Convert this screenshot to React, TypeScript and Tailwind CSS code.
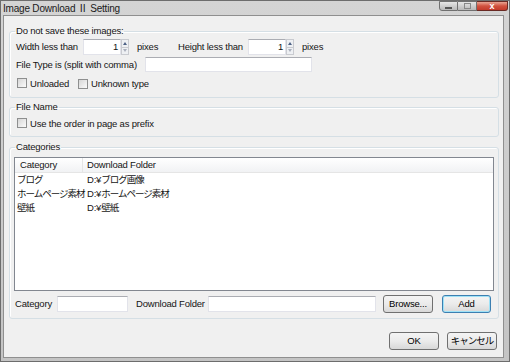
import React from "react";

const Check = () => (
  <span className="inline-block w-[10px] h-[10px] border border-[#8e8f8f] bg-linear-to-br from-[#d6d6d6] to-[#fbfbfb] shrink-0" />
);

const Spin = () => (
  <div className="w-[46px] h-[16px] flex items-stretch">
    <div className="flex-1 bg-white border border-[#e2e3ea] border-t-[#abadb3] flex items-center justify-end pr-[2px] leading-none">1</div>
    <div className="w-[8px] flex flex-col border border-[#c9cbd0] bg-[#eef0f3]">
      <div className="flex-1 flex items-center justify-center border-b border-[#c9cbd0]">
        <span className="w-0 h-0 border-l-[2px] border-r-[2px] border-b-[3px] border-l-transparent border-r-transparent border-b-[#4d6185]" />
      </div>
      <div className="flex-1 flex items-center justify-center">
        <span className="w-0 h-0 border-l-[2px] border-r-[2px] border-t-[3px] border-l-transparent border-r-transparent border-t-[#aab0bd]" />
      </div>
    </div>
  </div>
);

const Btn = ({ children, def, w }: { children: React.ReactNode; def?: boolean; w: string }) => (
  <button
    className={`${w} h-[18px] rounded-[3px] border ${def ? "border-[#3c7fb1] shadow-[inset_0_0_0_1px_#9fe2f7]" : "border-[#707070]"} bg-linear-to-b from-[#f4f4f4] via-[#ebebeb] to-[#d8d8d8] text-[9.5px] leading-none text-black flex items-center justify-center`}
  >
    {children}
  </button>
);

const jp = "tracking-[-1px]";

export default function App() {
  return (
    <div className="w-[510px] h-[362px] flex flex-col bg-linear-to-b from-[#d4d4d4] to-[#c4c4c4] border border-[#6d6d6d] font-['Liberation_Sans','Noto_Sans_CJK_JP',sans-serif] text-[9.5px] tracking-[-0.2px] text-[#151515] leading-[12px] whitespace-nowrap overflow-hidden">
      {/* title bar */}
      <div className="h-[14px] flex items-start">
        <div className="pl-[2px] pt-[2px] text-[10px] leading-[12px] text-[#1a1a1a]">Image Download Ⅱ Setting</div>
        <div className="ml-auto mr-[1px] flex h-[10px]">
          <div className="w-[19px] h-full border border-[#707070] rounded-bl-[3px] bg-linear-to-b from-[#e6e6e6] to-[#b8b8b8] flex items-center justify-center">
            <span className="w-[7px] h-[2px] bg-white border border-[#555] mt-[3px]" />
          </div>
          <div className="w-[19px] h-full border-y border-r border-[#707070] bg-linear-to-b from-[#e6e6e6] to-[#b8b8b8] flex items-center justify-center">
            <span className="w-[7px] h-[6px] border border-[#888] bg-transparent" />
          </div>
          <div className="w-[31px] h-full border-y border-r border-[#6a2a24] rounded-br-[3px] bg-linear-to-b from-[#e8a493] via-[#d0513f] to-[#c23a2a] flex items-center justify-center text-white text-[9px] font-bold leading-none">
            x
          </div>
        </div>
      </div>
      {/* client */}
      <div className="flex-1 ml-[2px] mr-[5px] mb-[3px] border border-[#8f8f8f] bg-[#f0f0f0] flex flex-col pl-[5px] pr-[4px]">
        <fieldset className="mt-[9px] border border-[#d5dfe5] rounded-[3px] px-0 pb-[6px] shadow-[inset_1px_1px_0_#fff]">
          <legend className="ml-[5px] px-px leading-[12px]">Do not save these images:</legend>
          <div className="pl-[6px] pt-[2px] flex flex-col">
            <div className="h-[16px] flex items-center">
              <span className="w-[67px]">Width less than</span>
              <Spin />
              <span className="ml-[8px] w-[41px]">pixes</span>
              <span className="w-[70px]">Height less than</span>
              <Spin />
              <span className="ml-[8px]">pixes</span>
            </div>
            <div className="h-[15px] mt-[2px] flex items-center">
              <span className="w-[129px]">File Type is (split with comma)</span>
              <div className="w-[167px] h-[15px] bg-white border border-[#e2e3ea] border-t-[#abadb3]" />
            </div>
            <div className="h-[14px] mt-[5px] flex items-center">
              <span className="ml-[1px]"><Check /></span>
              <span className="ml-[3px] w-[48px]">Unloaded</span>
              <Check />
              <span className="ml-[3px]">Unknown type</span>
            </div>
          </div>
        </fieldset>

        <fieldset className="mt-[3px] border border-[#d5dfe5] rounded-[3px] px-0 pb-[5px] shadow-[inset_1px_1px_0_#fff]">
          <legend className="ml-[5px] px-px leading-[12px]">File Name</legend>
          <div className="pl-[6px] pt-[4px]">
            <div className="h-[14px] flex items-center">
              <span className="ml-[1px]"><Check /></span>
              <span className="ml-[3px]">Use the order in page as prefix</span>
            </div>
          </div>
        </fieldset>

        <fieldset className="mt-[4px] border border-[#d5dfe5] rounded-[3px] px-0 pb-[5px] shadow-[inset_1px_1px_0_#fff]">
          <legend className="ml-[5px] px-px leading-[12px]">Categories</legend>
          <div className="px-[4px] pt-[4px] flex flex-col">
            <div className="h-[134px] border border-[#828790] bg-white flex flex-col">
              <div className="h-[15px] flex bg-linear-to-b from-white to-[#f1f2f4] border-b border-[#e5e5e5]">
                <div className="w-[68px] pl-[5px] flex items-center border-r border-[#e5e5e5]">Category</div>
                <div className="pl-[4px] flex items-center">Download Folder</div>
              </div>
              {[
                ["ブログ", "ブログ画像"],
                ["ホームページ素材", "ホームページ素材"],
                ["壁紙", "壁紙"],
              ].map(([a, b]) => (
                <div key={a} className="h-[14px] flex items-center">
                  <div className={`w-[72px] pl-[2px] ${jp}`}>{a}</div>
                  <div>
                    D:¥<span className={jp}>{b}</span>
                  </div>
                </div>
              ))}
            </div>
            <div className="mt-[4px] h-[18px] flex items-center">
              <span className="pl-[1px] w-[43px]">Category</span>
              <div className="w-[71px] h-[16px] bg-white border border-[#e2e3ea] border-t-[#abadb3]" />
              <span className="ml-[8px] w-[72px]">Download Folder</span>
              <div className="w-[168px] h-[16px] bg-white border border-[#e2e3ea] border-t-[#abadb3]" />
              <span className="ml-[7px]"><Btn w="w-[50px]">Browse...</Btn></span>
              <span className="ml-[9px]"><Btn w="w-[49px]" def>Add</Btn></span>
            </div>
          </div>
        </fieldset>

        <div className="mt-[13px] flex justify-end pr-[2px]">
          <Btn w="w-[50px]">OK</Btn>
          <span className="ml-[8px]"><Btn w="w-[50px]"><span className={jp}>キャンセル</span></Btn></span>
        </div>
      </div>
    </div>
  );
}
